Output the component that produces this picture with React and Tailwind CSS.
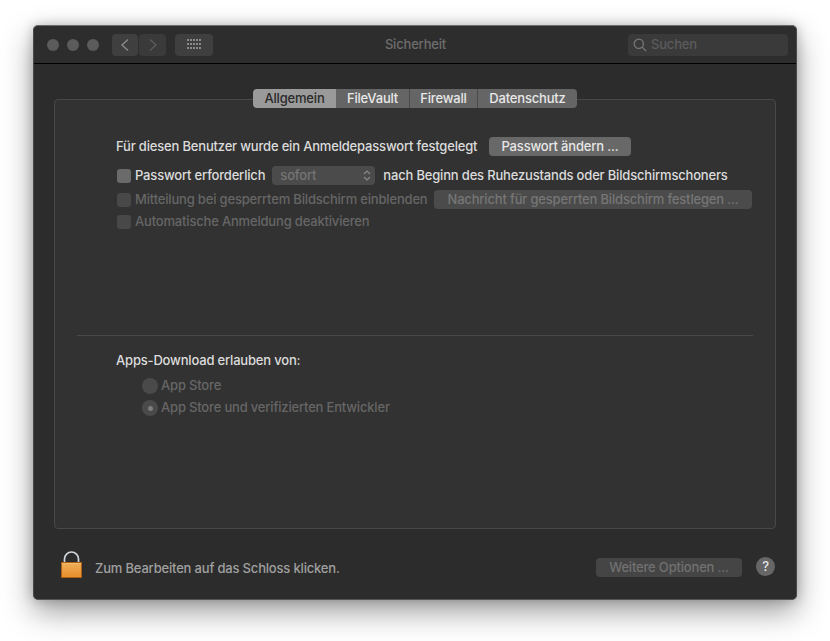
const font = { fontFamily: '"Inter", "Liberation Sans", sans-serif' };

function Check({ disabled }) {
  return <span className={`block w-[14px] h-[14px] ml-px rounded-[3px] shrink-0 ${disabled ? "bg-[#484848]" : "bg-[#6a6a6a]"}`} />;
}

function Btn({ children, className }) {
  return <div className={`h-[19px] rounded-[4px] flex items-center justify-center text-[13px] leading-none ${className}`}>{children}</div>;
}

function Radio({ selected, label }) {
  return (
    <div className="flex items-center h-[22px] pl-[26px]">
      <span className="w-[16px] h-[16px] rounded-full bg-[#4a4a4a] flex items-center justify-center shrink-0">
        {selected && <span className="w-[5px] h-[5px] rounded-full bg-[#7d7d7d]" />}
      </span>
      <span className="ml-[3px] text-[13px] text-[#666666] whitespace-nowrap">{label}</span>
    </div>
  );
}

export default function App() {
  const tabs = [
    ["Allgemein", "w-[83px] bg-[#9a9a9a] text-[#2a2a2a] rounded-l-[4px]"],
    ["FileVault", "w-[74px] text-[#e8e8e8] border-r border-[#4a4a4a]"],
    ["Firewall", "w-[68px] text-[#e8e8e8] border-r border-[#4a4a4a]"],
    ["Datenschutz", "w-[99px] text-[#e8e8e8]"],
  ];
  return (
    <div style={font} className="w-[830px] h-[641px] bg-white pt-[25px] pl-[33px] overflow-hidden tracking-[-0.18px] font-[450]">
      <div className="w-[764px] h-[575px] bg-[#2c2c2c] rounded-[5px] border-t border-t-[#6a6a6a] border-x border-x-[#4a4a4a] border-b border-b-[#555555] shadow-[0_12px_30px_rgba(0,0,0,0.38),0_0_12px_rgba(0,0,0,0.22)] flex flex-col">
        {/* title bar */}
        <div className="h-[38px] shrink-0 bg-[#2d2d2d] border-b border-black flex items-center relative rounded-t-[5px]">
          <div className="flex gap-[8px] ml-[13px]">
            <span className="w-[12px] h-[12px] rounded-full bg-[#5b5b5b]" />
            <span className="w-[12px] h-[12px] rounded-full bg-[#5b5b5b]" />
            <span className="w-[12px] h-[12px] rounded-full bg-[#5b5b5b]" />
          </div>
          <div className="flex ml-[13px] gap-px">
            <div className="w-[26px] h-[22px] rounded-[4px] bg-[#3f3f3f] flex items-center justify-center">
              <svg width="10" height="14" viewBox="0 0 10 14" fill="none"><path d="M8 1.5 2 7l6 5.5" stroke="#8a8a8a" strokeWidth="1.4" /></svg>
            </div>
            <div className="w-[27px] h-[22px] rounded-[4px] bg-[#3a3a3a] flex items-center justify-center">
              <svg width="10" height="14" viewBox="0 0 10 14" fill="none"><path d="M2 1.5 8 7l-6 5.5" stroke="#5a5a5a" strokeWidth="1.4" /></svg>
            </div>
          </div>
          <div className="w-[38px] h-[22px] ml-[9px] rounded-[4px] bg-[#3f3f3f] flex items-center justify-center">
            <svg width="15" height="11" viewBox="0 0 15 11" fill="#8a8a8a">
              {[0, 1, 2].map((r) => [0, 1, 2, 3, 4].map((c) => <rect key={`${r}${c}`} x={c * 3} y={r * 4} width="2" height="2" />))}
            </svg>
          </div>
          <div className="flex-1 text-center text-[13px] text-[#6e6e6e] pr-[10px]">Sicherheit</div>
          <div className="w-[160px] h-[22px] mr-[8px] rounded-[4px] bg-[#3a3a3a] flex items-center pl-[5px]">
            <svg width="14" height="14" viewBox="0 0 14 14" fill="none" stroke="#7a7a7a" strokeWidth="1.2"><circle cx="5.8" cy="5.8" r="4.6" /><path d="m9.2 9.2 4 4" /></svg>
            <span className="ml-[4px] text-[13px] text-[#5c5c5c]">Suchen</span>
          </div>
        </div>

        {/* content */}
        <div className="px-[20px] pt-[25px] flex flex-col flex-1">
          <div className="flex justify-center h-[19px] -mb-[9px] relative z-10">
            <div className="flex h-[19px] rounded-[4px] bg-[#656565] overflow-hidden">
              {tabs.map(([t, c]) => (
                <div key={t} className={`flex items-center justify-center text-[13px] ${c}`}>{t}</div>
              ))}
            </div>
          </div>
          <div className="h-[430px] rounded-[4px] bg-[#323232] border border-[#484848] flex flex-col text-[13px]">
            <div className="pl-[61px] pt-[37px] pr-[23px]">
              <div className="flex items-center h-[19px]">
                <span className="text-[#dcdcdc] whitespace-nowrap">Für diesen Benutzer wurde ein Anmeldepasswort festgelegt</span>
                <Btn className="w-[142px] ml-auto mr-[121px] bg-[#686868] text-[#e6e6e6]">Passwort ändern ...</Btn>
              </div>
              <div className="flex items-center h-[19px] mt-[10px]">
                <Check />
                <span className="ml-[4px] text-[#dcdcdc] whitespace-nowrap">Passwort erforderlich</span>
                <div className="w-[103px] h-[19px] ml-[7px] rounded-[4px] bg-[#4b4b4b] flex items-center justify-between pl-[8px] pr-[4px] shrink-0">
                  <span className="text-[#757575]">sofort</span>
                  <svg width="8" height="13" viewBox="0 0 8 13" fill="none" stroke="#8a8a8a" strokeWidth="1.1"><path d="m1 5 3-3 3 3M1 8l3 3 3-3" /></svg>
                </div>
                <span className="ml-[8px] text-[#dcdcdc] whitespace-nowrap">nach Beginn des Ruhezustands oder Bildschirmschoners</span>
              </div>
              <div className="flex items-center h-[19px] mt-[5px]">
                <Check disabled />
                <span className="ml-[4px] text-[#666666] whitespace-nowrap">Mitteilung bei gesperrtem Bildschirm einblenden</span>
                <Btn className="w-[318px] ml-auto bg-[#4b4b4b] text-[#767676] shrink-0">Nachricht für gesperrten Bildschirm festlegen ...</Btn>
              </div>
              <div className="flex items-center h-[19px] mt-[3px]">
                <Check disabled />
                <span className="ml-[4px] text-[#666666] whitespace-nowrap">Automatische Anmeldung deaktivieren</span>
              </div>
            </div>
            <div className="h-px bg-[#484848] mx-[22px] mt-[104px]" />
            <div className="pl-[61px] pt-[16px]">
              <div className="h-[18px] flex items-center text-[#dcdcdc]">Apps-Download erlauben von:</div>
              <div className="mt-[5px]">
                <Radio label="App Store" />
                <Radio selected label="App Store und verifizierten Entwickler" />
              </div>
            </div>
          </div>

          {/* footer */}
          <div className="flex items-center h-[77px]">
            <svg width="24" height="27" viewBox="0 0 24 27" className="ml-[6px] mb-[6px] shrink-0">
              <defs>
                <linearGradient id="lockBody" x1="0" y1="0" x2="0" y2="1">
                  <stop offset="0" stopColor="#f8bd6c" />
                  <stop offset="1" stopColor="#ee9128" />
                </linearGradient>
              </defs>
              <path d="M4.5 12V8a7 7 0 0 1 14 0v4" fill="none" stroke="#cfd6dc" strokeWidth="1.7" />
              <rect x="1.5" y="11.5" width="20" height="15" fill="url(#lockBody)" stroke="#a85f16" />
              <path d="M2 14h19M2 16h19M2 18h19M2 20h19M2 22h19M2 24h19" stroke="#d5842c" strokeWidth="0.5" />
            </svg>
            <span className="ml-[11px] mt-[2px] text-[13px] text-[#a0a0a0] whitespace-nowrap">Zum Bearbeiten auf das Schloss klicken.</span>
            <Btn className="w-[146px] ml-auto bg-[#454545] text-[#717171]">Weitere Optionen ...</Btn>
            <div className="w-[19px] h-[19px] ml-[14px] mr-[1px] mb-[2px] rounded-full bg-[#666666] flex items-center justify-center text-[13px] font-medium text-[#e4e4e4]">?</div>
          </div>
        </div>
      </div>
    </div>
  );
}
